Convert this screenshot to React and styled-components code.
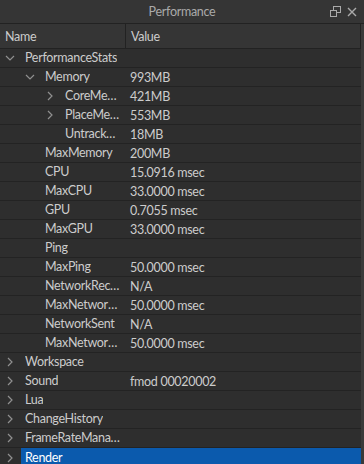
import React from 'react';
import styled, { createGlobalStyle } from 'styled-components';

const Global = createGlobalStyle`
  html, body { margin: 0; padding: 0; background: #2e2e2e; }
  body { font-family: Lato, 'Noto Sans', sans-serif; letter-spacing: -0.3px; }
`;

const Window = styled.div`
  width: 364px;
  height: 464px;
  display: flex;
  flex-direction: column;
  background: #2e2e2e;
  overflow: hidden;
`;

const TitleBar = styled.div`
  height: 23px;
  flex: none;
  position: relative;
  display: flex;
  align-items: center;
  justify-content: center;
  background: #353535;
  color: #aaaaaa;
  font-size: 12.5px;
  border-bottom: 1px solid #222;
`;

const TitleActions = styled.div`
  position: absolute;
  right: 7px;
  top: 0;
  height: 23px;
  display: flex;
  align-items: center;
  gap: 6px;
`;

const Body = styled.div`
  flex: 1;
  display: flex;
  min-height: 0;
`;

const Table = styled.div`
  flex: 1;
  display: flex;
  flex-direction: column;
  min-width: 0;
`;

const Track = styled.div`
  width: 3px;
  flex: none;
  background: #3a3a3a;
`;

const Header = styled.div`
  height: 24px;
  flex: none;
  display: grid;
  grid-template-columns: 125px 1fr;
  background: #353535;
  border-bottom: 1px solid #222;
  border-right: 1px solid #222;
  color: #cccccc;
  font-size: 12.5px;
`;

const HeadCell = styled.div`
  display: flex;
  align-items: center;
  padding-left: 5px;
  padding-top: 1px;
  & + & { border-left: 1px solid #222; }
`;

const Row = styled.div`
  height: 18px;
  flex: none;
  display: grid;
  grid-template-columns: 125px minmax(0, 1fr);
  border-bottom: 1px solid #232323;
  color: #cccccc;
  font-size: 12.5px;
  line-height: 20px;
`;

const NameCell = styled.div`
  display: flex;
  align-items: center;
  padding-left: ${p => 5 + p.$depth * 20}px;
  padding-right: 5px;
  min-width: 0;
  overflow: hidden;
`;

const Arrow = styled.span`
  width: 20px;
  flex: none;
  display: flex;
  align-items: center;
`;

const Label = styled.span`
  min-width: 0;
  white-space: nowrap;
  overflow: hidden;
  text-overflow: ellipsis;
`;

const Value = styled.div`
  padding-left: 5px;
  white-space: nowrap;
  overflow: hidden;
`;

const SelectedRow = styled(Row)`
  grid-template-columns: 21px 1fr;
`;

const Selection = styled.div`
  background: #0b5aad;
  color: #ffffff;
  padding-left: 4px;
`;

const Chevron = ({ open }) => (
  <svg width="10" height="10" viewBox="0 0 10 10">
    {open
      ? <path d="M1 3 L5 7 L9 3" fill="none" stroke="#909090" strokeWidth="1.2" />
      : <path d="M3 1 L7 5 L3 9" fill="none" stroke="#909090" strokeWidth="1.2" />}
  </svg>
);

const rows = [
  { name: 'PerformanceStats', depth: 0, arrow: 'open' },
  { name: 'Memory', depth: 1, arrow: 'open', value: '993MB' },
  { name: 'CoreMemory', depth: 2, arrow: 'closed', value: '421MB' },
  { name: 'PlaceMemory', depth: 2, arrow: 'closed', value: '553MB' },
  { name: 'UntrackedMemory', depth: 2, value: '18MB' },
  { name: 'MaxMemory', depth: 1, value: '200MB' },
  { name: 'CPU', depth: 1, value: '15.0916 msec' },
  { name: 'MaxCPU', depth: 1, value: '33.0000 msec' },
  { name: 'GPU', depth: 1, value: '0.7055 msec' },
  { name: 'MaxGPU', depth: 1, value: '33.0000 msec' },
  { name: 'Ping', depth: 1, value: '' },
  { name: 'MaxPing', depth: 1, value: '50.0000 msec' },
  { name: 'NetworkReceived', depth: 1, value: 'N/A' },
  { name: 'MaxNetworkReceived', depth: 1, value: '50.0000 msec' },
  { name: 'NetworkSent', depth: 1, value: 'N/A' },
  { name: 'MaxNetworkSent', depth: 1, value: '50.0000 msec' },
  { name: 'Workspace', depth: 0, arrow: 'closed' },
  { name: 'Sound', depth: 0, arrow: 'closed', value: 'fmod 00020002' },
  { name: 'Lua', depth: 0, arrow: 'closed' },
  { name: 'ChangeHistory', depth: 0, arrow: 'closed' },
  { name: 'FrameRateManager', depth: 0, arrow: 'closed' },
];

export default function App() {
  return (
    <Window>
      <Global />
      <TitleBar>
        Performance
        <TitleActions>
          <svg width="11" height="11" viewBox="0 0 11 11">
            <rect x="3.5" y="0.5" width="7" height="6" fill="none" stroke="#aaa" />
            <rect x="0.5" y="4.5" width="6" height="6" fill="#353535" stroke="#aaa" />
          </svg>
          <svg width="10" height="10" viewBox="0 0 10 10">
            <path d="M1 1 L9 9 M9 1 L1 9" stroke="#aaa" strokeWidth="1.4" />
          </svg>
        </TitleActions>
      </TitleBar>
      <Body>
        <Table>
          <Header>
            <HeadCell>Name</HeadCell>
            <HeadCell>Value</HeadCell>
          </Header>
          {rows.map((r, i) => (
            <Row key={i}>
              <NameCell $depth={r.depth}>
                <Arrow>{r.arrow && <Chevron open={r.arrow === 'open'} />}</Arrow>
                <Label>{r.name}</Label>
              </NameCell>
              <Value>{r.value}</Value>
            </Row>
          ))}
          <SelectedRow>
            <NameCell $depth={0}>
              <Arrow><Chevron open={false} /></Arrow>
            </NameCell>
            <Selection>Render</Selection>
          </SelectedRow>
        </Table>
        <Track />
      </Body>
    </Window>
  );
}
